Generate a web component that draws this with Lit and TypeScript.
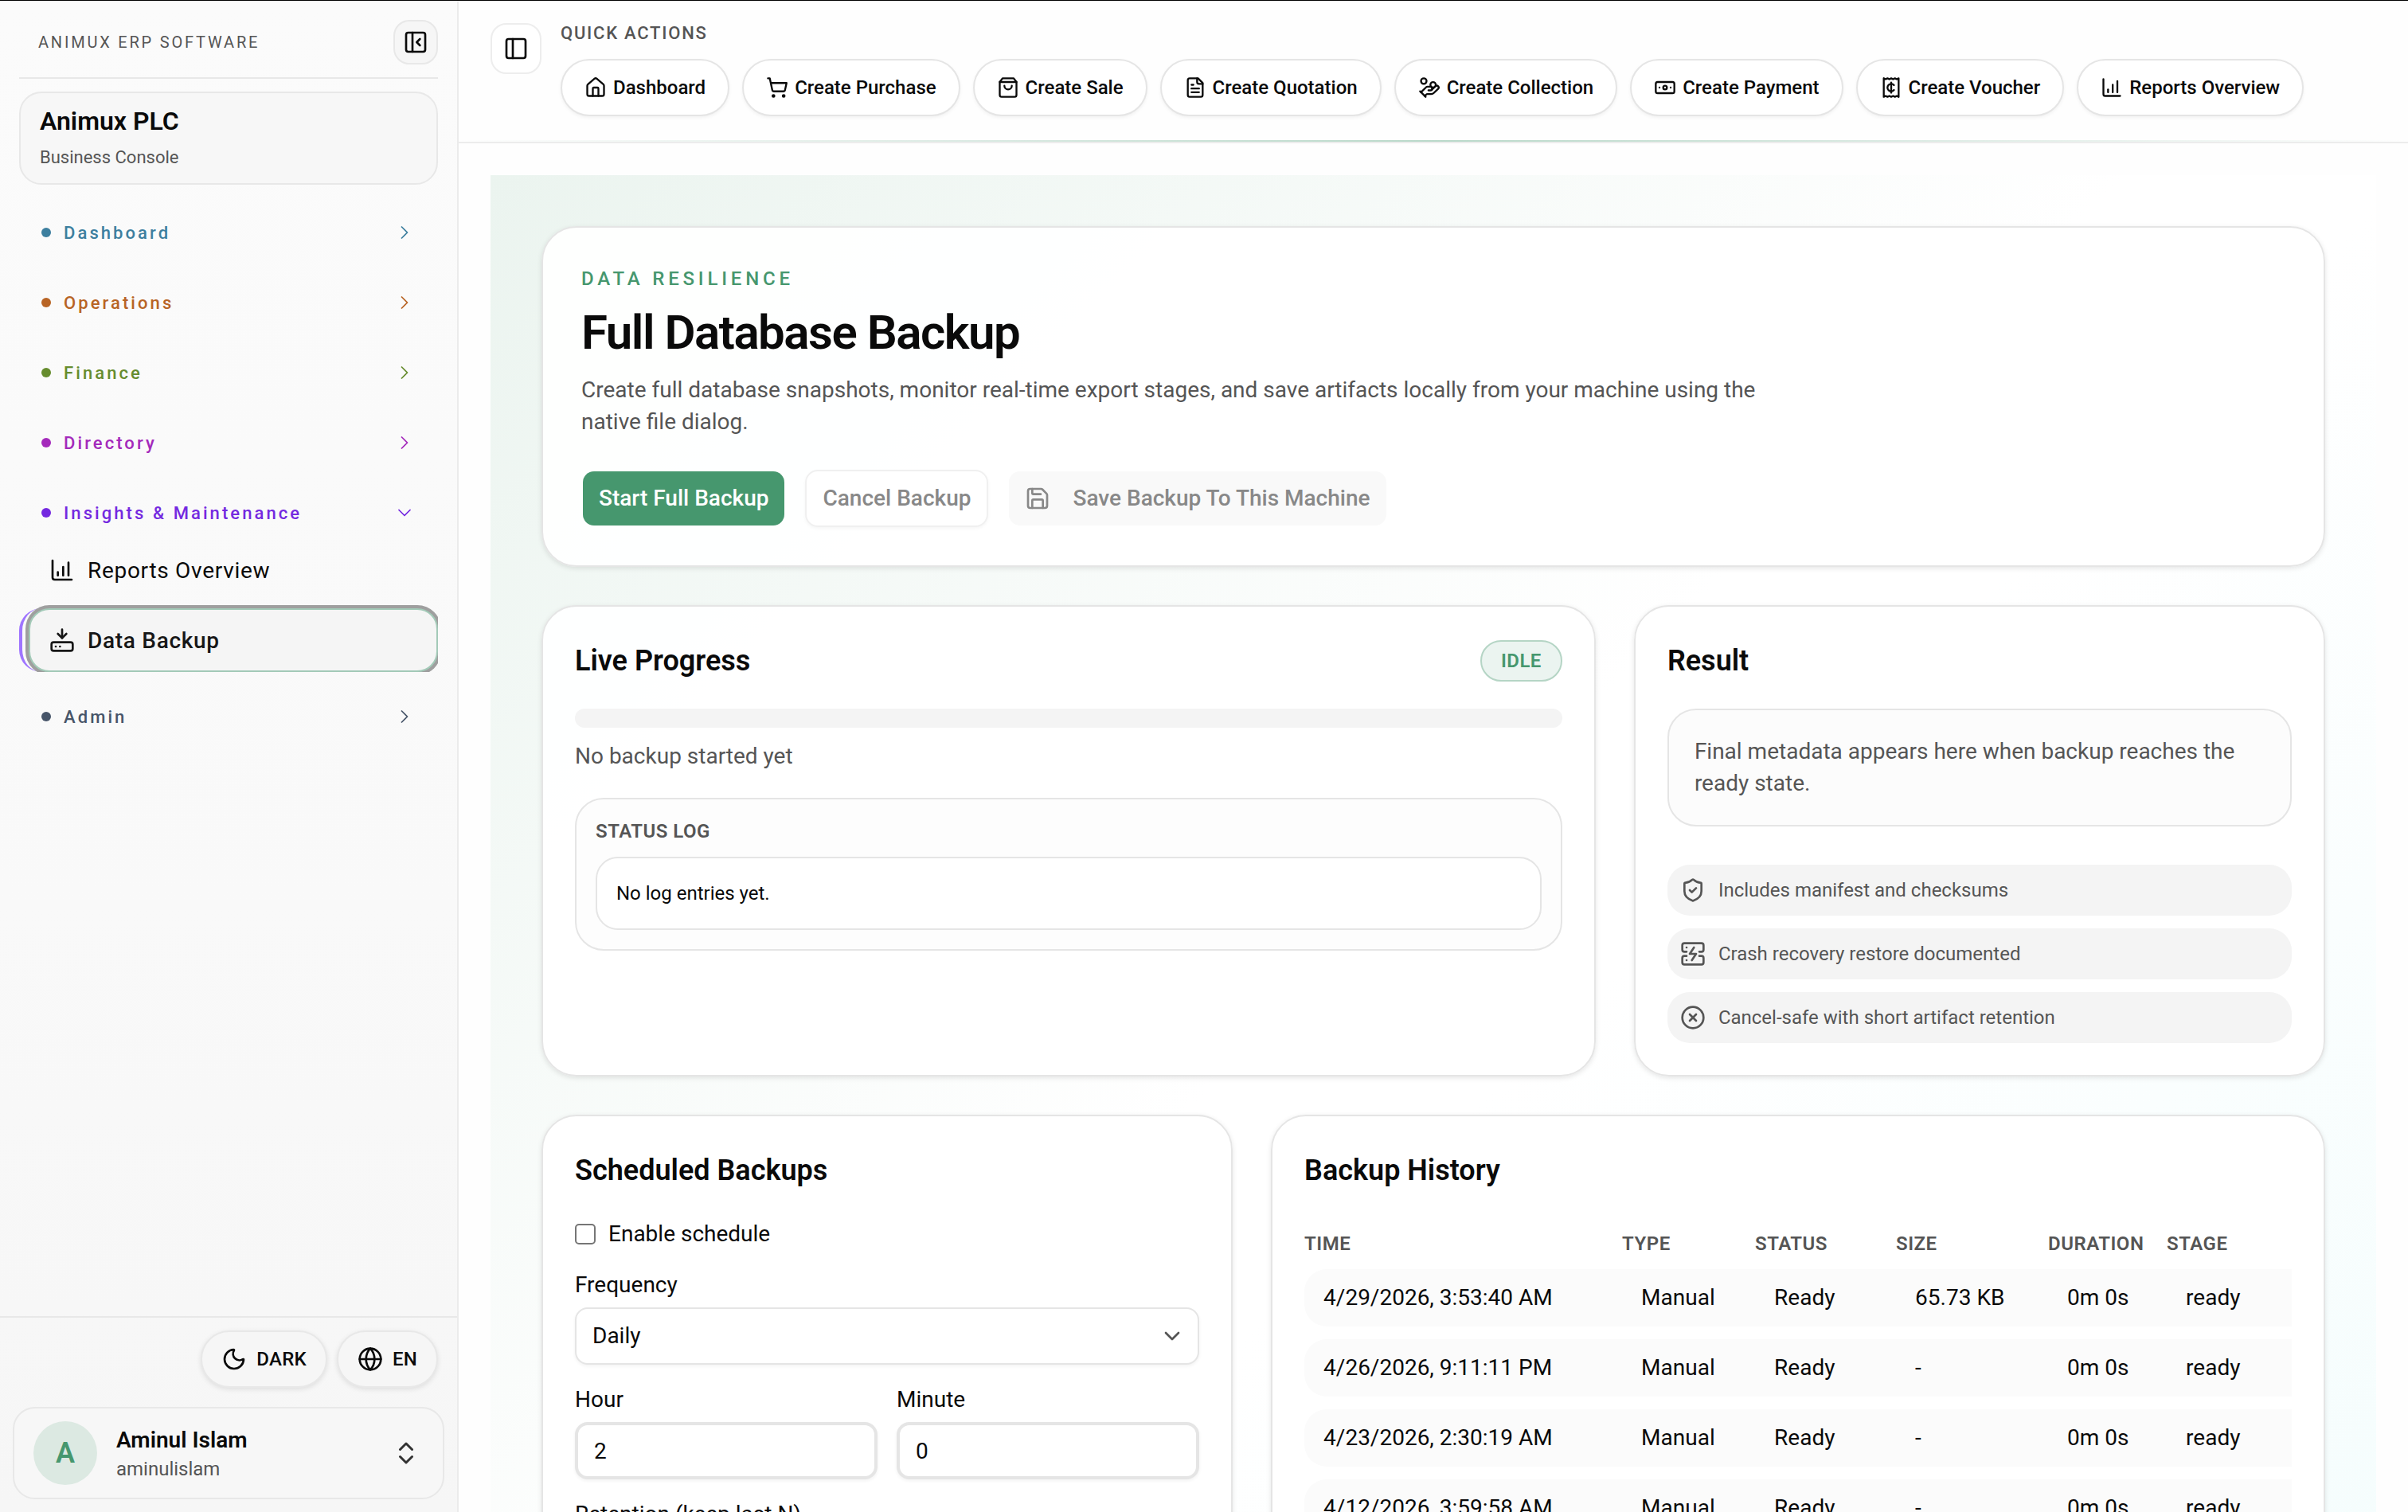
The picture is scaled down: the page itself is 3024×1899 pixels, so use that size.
import { LitElement, html, css, svg, nothing, type SVGTemplateResult } from "lit";
import { customElement, property } from "lit/decorators.js";
import { classMap } from "lit/directives/class-map.js";

const ICONS: Record<string, SVGTemplateResult> = {
  panelClose: svg`<rect width="18" height="18" x="3" y="3" rx="2"/><path d="M9 3v18"/><path d="m16 15-3-3 3-3"/>`,
  panel: svg`<rect width="18" height="18" x="3" y="3" rx="2"/><path d="M9 3v18"/>`,
  right: svg`<path d="m9 18 6-6-6-6"/>`,
  down: svg`<path d="m6 9 6 6 6-6"/>`,
  upDown: svg`<path d="m7 15 5 5 5-5"/><path d="m7 9 5-5 5 5"/>`,
  chart: svg`<path d="M13 17V9"/><path d="M18 17V5"/><path d="M3 3v16a2 2 0 0 0 2 2h16"/><path d="M8 17v-3"/>`,
  drive: svg`<path d="M12 2v8"/><path d="m16 6-4 4-4-4"/><rect width="20" height="8" x="2" y="14" rx="2"/><path d="M6 18h.01"/><path d="M10 18h.01"/>`,
  moon: svg`<path d="M20.985 12.486a9 9 0 1 1-9.473-9.472c.405-.022.617.46.402.803a6 6 0 0 0 8.268 8.268c.344-.215.825-.004.803.401"/>`,
  globe: svg`<circle cx="12" cy="12" r="10"/><path d="M12 2a14.5 14.5 0 0 0 0 20 14.5 14.5 0 0 0 0-20"/><path d="M2 12h20"/>`,
  home: svg`<path d="M15 21v-8a1 1 0 0 0-1-1h-4a1 1 0 0 0-1 1v8"/><path d="M3 10a2 2 0 0 1 .709-1.528l7-6a2 2 0 0 1 2.582 0l7 6A2 2 0 0 1 21 10v9a2 2 0 0 1-2 2H5a2 2 0 0 1-2-2z"/>`,
  cart: svg`<circle cx="8" cy="21" r="1"/><circle cx="19" cy="21" r="1"/><path d="M2.05 2.05h2l2.66 12.42a2 2 0 0 0 2 1.58h9.78a2 2 0 0 0 1.95-1.57l1.65-7.43H5.12"/>`,
  bag: svg`<path d="M6 2 3 6v14a2 2 0 0 0 2 2h14a2 2 0 0 0 2-2V6l-3-4Z"/><path d="M3 6h18"/><path d="M16 10a4 4 0 0 1-8 0"/>`,
  file: svg`<path d="M15 2H6a2 2 0 0 0-2 2v16a2 2 0 0 0 2 2h12a2 2 0 0 0 2-2V7Z"/><path d="M14 2v4a2 2 0 0 0 2 2h4"/><path d="M10 9H8"/><path d="M16 13H8"/><path d="M16 17H8"/>`,
  coins: svg`<path d="M11 15h2a2 2 0 1 0 0-4h-3c-.6 0-1.1.2-1.4.6L3 17"/><path d="m7 21 1.6-1.4c.3-.4.8-.6 1.4-.6h4c1.1 0 2.1-.4 2.8-1.2l4.6-4.4a2 2 0 0 0-2.75-2.91l-4.2 3.9"/><path d="m2 16 6 6"/><circle cx="16" cy="9" r="2.9"/><circle cx="6" cy="5" r="3"/>`,
  banknote: svg`<rect width="20" height="12" x="2" y="6" rx="2"/><circle cx="12" cy="12" r="2"/><path d="M6 12h.01M18 12h.01"/>`,
  receipt: svg`<path d="M4 2v20l2-1 2 1 2-1 2 1 2-1 2 1 2-1 2 1V2l-2 1-2-1-2 1-2-1-2 1-2-1-2 1Z"/><path d="M12 6.5v11"/><path d="M15 9.4a4 4 0 1 0 0 5.2"/>`,
  save: svg`<path d="M15.2 3a2 2 0 0 1 1.4.6l3.8 3.8a2 2 0 0 1 .6 1.4V19a2 2 0 0 1-2 2H5a2 2 0 0 1-2-2V5a2 2 0 0 1 2-2z"/><path d="M17 21v-7a1 1 0 0 0-1-1H8a1 1 0 0 0-1 1v7"/><path d="M7 3v4a1 1 0 0 0 1 1h7"/>`,
  shield: svg`<path d="M20 13c0 5-3.5 7.5-7.66 8.95a1 1 0 0 1-.67-.01C7.5 20.5 4 18 4 13V6a1 1 0 0 1 1-1c2 0 4.500-1.200 6.240-2.720a1.170 1.170 0 0 1 1.520 0C14.510 3.810 17 5 19 5a1 1 0 0 1 1 1z"/><path d="m9 12 2 2 4-4"/>`,
  crash: svg`<path d="M6 10H4a2 2 0 0 1-2-2V4a2 2 0 0 1 2-2h16a2 2 0 0 1 2 2v4a2 2 0 0 1-2 2h-2"/><path d="M6 14H4a2 2 0 0 0-2 2v4a2 2 0 0 0 2 2h16a2 2 0 0 0 2-2v-4a2 2 0 0 0-2-2h-2"/><path d="M6 6h.01"/><path d="M6 18h.01"/><path d="m13 6-4 6h6l-4 6"/>`,
  cancel: svg`<circle cx="12" cy="12" r="10"/><path d="m15 9-6 6"/><path d="m9 9 6 6"/>`,
};

@customElement("ui-icon")
export class UiIcon extends LitElement {
  @property() name = "";
  @property({ type: Number }) weight = 2;

  static styles = css`
    :host { display: inline-flex; flex: none; width: 32px; height: 32px; }
    svg { width: 100%; height: 100%; fill: none; stroke: currentColor; stroke-linecap: round; stroke-linejoin: round; }
  `;

  render() {
    return html`<svg viewBox="0 0 24 24" stroke-width=${this.weight} aria-hidden="true">${ICONS[this.name]}</svg>`;
  }
}

const base = css`
  :host, * { box-sizing: border-box; }
  * { margin: 0; }
  button, input, select { font: inherit; color: inherit; letter-spacing: inherit; }
  button { cursor: pointer; }
  a { color: inherit; text-decoration: none; }
  ul { list-style: none; padding: 0; }
`;

interface NavGroup { label: string; tone: string; open?: boolean; }

const GROUPS: NavGroup[] = [
  { label: "Dashboard", tone: "blue" },
  { label: "Operations", tone: "orange" },
  { label: "Finance", tone: "green" },
  { label: "Directory", tone: "magenta" },
  { label: "Insights & Maintenance", tone: "violet", open: true },
  { label: "Admin", tone: "slate" },
];

const LINKS = [
  { label: "Reports Overview", icon: "chart", active: false },
  { label: "Data Backup", icon: "drive", active: true },
];

@customElement("side-nav")
export class SideNav extends LitElement {
  static styles = [base, css`
    :host {
      display: flex; flex-direction: column; width: 576px; flex: none; min-height: 0;
      border-right: 2px solid #ebebeb; background: linear-gradient(#fbfbfb, #f9f9f9 60%, #f6f6f6);
    }
    .top { padding: 24px 24px 0; display: flex; flex-direction: column; gap: 16px; }
    .brand { display: flex; align-items: center; justify-content: space-between; padding: 0 0 16px 24px; border-bottom: 2px solid #e8e8e8; }
    .brand-name { font-size: 20px; line-height: 32px; letter-spacing: 0.14em; color: #555; }
    .collapse { display: flex; align-items: center; justify-content: center; width: 56px; height: 56px; padding: 0; border: 2px solid #e8e8e8; border-radius: 20px; background: #f6f6f6; }
    .company { padding: 16px 24px; border: 2px solid #e8e8e8; border-radius: 28px; background: #f7f7f7; display: flex; flex-direction: column; gap: 11px; }
    .company-name { font-size: 32px; line-height: 38px; font-weight: 600; }
    .company-sub { font-size: 22px; line-height: 32px; color: #555; }
    .nav { flex: 1; min-height: 0; padding: 28px 24px 0; display: flex; flex-direction: column; gap: 24px; overflow: hidden; }
    .group { display: flex; align-items: center; gap: 16px; width: 100%; height: 64px; padding: 0 28px; border: 0; background: none; font-size: 22px; font-weight: 500; letter-spacing: 0.14em; text-align: left; }
    .group ui-icon { width: 28px; height: 28px; margin-left: auto; }
    .dot { width: 12px; height: 12px; border-radius: 50%; background: currentColor; }
    .blue { color: #3d7f9f; } .orange { color: #b86425; } .green { color: #668c2e; }
    .magenta { color: #a42abb; } .violet { color: #7429e0; } .slate { color: #475569; }
    .sub { display: flex; flex-direction: column; gap: 8px; overflow: hidden; }
    .entry { border-left: 4px solid transparent; border-radius: 28px; padding-left: 8px; }
    .entry.active { border-left-color: #9f75ff; }
    .link { display: flex; align-items: center; gap: 16px; height: 80px; padding: 0 24px; border: 2px solid transparent; border-radius: 26px; font-size: 28px; letter-spacing: 0.025em; }
    .active .link { font-weight: 500; color: #171717; background: #f5f5f5; border-color: #a3cab8; box-shadow: 0 0 0 4px #9f9f9f; }
    .foot { padding: 16px; border-top: 2px solid #e8e8e8; display: flex; flex-direction: column; gap: 24px; }
    .tools { display: flex; justify-content: flex-end; gap: 12px; padding-right: 8px; }
    .tool { display: flex; align-items: center; gap: 12px; height: 72px; padding: 0 24px; border: 2px solid #e8e8e8; border-radius: 36px; background: #f6f6f6; box-shadow: 0 2px 6px rgba(0, 0, 0, 0.1); font-size: 24px; font-weight: 500; letter-spacing: 0.01em; }
    .user { display: flex; align-items: center; gap: 24px; width: 100%; padding: 16px 28px 16px 24px; border: 2px solid #e8e8e8; border-radius: 28px; background: #f7f7f7; text-align: left; }
    .user ui-icon { width: 36px; height: 36px; margin-left: auto; color: #333; }
    .avatar { display: grid; place-items: center; width: 80px; height: 80px; border-radius: 50%; background: #dce9e2; color: #46976e; font-size: 36px; font-weight: 600; }
    .who { display: flex; flex-direction: column; }
    .who-name { font-size: 28px; line-height: 40px; font-weight: 600; }
    .who-id { font-size: 24px; line-height: 32px; color: #555; }
  `];

  render() {
    return html`
      <div class="top">
        <div class="brand">
          <span class="brand-name">ANIMUX ERP SOFTWARE</span>
          <button class="collapse" aria-label="Collapse sidebar"><ui-icon name="panelClose"></ui-icon></button>
        </div>
        <div class="company">
          <div class="company-name">Animux PLC</div>
          <div class="company-sub">Business Console</div>
        </div>
      </div>
      <nav class="nav">
        ${GROUPS.map((g) => html`
          <div>
            <button class="group ${g.tone}" aria-expanded=${g.open ? "true" : "false"}>
              <span class="dot"></span>${g.label}
              <ui-icon name=${g.open ? "down" : "right"} weight="1.5"></ui-icon>
            </button>
            ${g.open ? html`<ul class="sub">
              ${LINKS.map((l) => html`<li class=${classMap({ entry: true, active: l.active })}>
                <a class="link" href="#"><ui-icon name=${l.icon}></ui-icon>${l.label}</a>
              </li>`)}
            </ul>` : nothing}
          </div>`)}
      </nav>
      <div class="foot">
        <div class="tools">
          <button class="tool"><ui-icon name="moon"></ui-icon>DARK</button>
          <button class="tool"><ui-icon name="globe"></ui-icon>EN</button>
        </div>
        <button class="user">
          <span class="avatar">A</span>
          <span class="who"><span class="who-name">Aminul Islam</span><span class="who-id">aminulislam</span></span>
          <ui-icon name="upDown"></ui-icon>
        </button>
      </div>`;
  }
}

const ACTIONS = [
  ["home", "Dashboard"], ["cart", "Create Purchase"], ["bag", "Create Sale"], ["file", "Create Quotation"],
  ["coins", "Create Collection"], ["banknote", "Create Payment"], ["receipt", "Create Voucher"], ["chart", "Reports Overview"],
];

@customElement("quick-bar")
export class QuickBar extends LitElement {
  static styles = [base, css`
    :host { display: block; flex: none; }
    .bar { display: flex; gap: 24px; padding: 25px 40px 30px; }
    .toggle { display: flex; align-items: center; justify-content: center; flex: none; width: 64px; height: 64px; margin-top: 3px; padding: 0; border: 2px solid #ededed; border-radius: 20px; background: #fff; }
    .label { font-size: 22px; line-height: 32px; font-weight: 500; letter-spacing: 0.08em; color: #555; }
    .list { display: flex; gap: 16px; margin-top: 16px; }
    .pill { display: flex; align-items: center; gap: 8px; height: 72px; padding: 0 28px; border: 2px solid #e5e5e5; border-radius: 36px; background: #fff; box-shadow: 0 2px 4px rgba(0, 0, 0, 0.05); font-size: 24px; font-weight: 500; white-space: nowrap; }
    .pill ui-icon { width: 28px; height: 28px; }
    .glow { height: 2px; background: linear-gradient(90deg, transparent, #b9d8c9, transparent); }
    .rule { height: 2px; background: #ececec; }
  `];

  render() {
    return html`
      <div class="bar">
        <button class="toggle" aria-label="Toggle sidebar"><ui-icon name="panel"></ui-icon></button>
        <div>
          <div class="label">QUICK ACTIONS</div>
          <div class="list">
            ${ACTIONS.map(([icon, text]) => html`<a class="pill" href="#"><ui-icon name=${icon}></ui-icon>${text}</a>`)}
          </div>
        </div>
      </div>
      <div class="glow"></div>
      <div class="rule"></div>`;
  }
}

const NOTES = [
  ["shield", "Includes manifest and checksums"],
  ["crash", "Crash recovery restore documented"],
  ["cancel", "Cancel-safe with short artifact retention"],
];

const HISTORY = [
  ["4/29/2026, 3:53:40 AM", "Manual", "Ready", "65.73 KB", "0m 0s", "ready"],
  ["4/26/2026, 9:11:11 PM", "Manual", "Ready", "-", "0m 0s", "ready"],
  ["4/23/2026, 2:30:19 AM", "Manual", "Ready", "-", "0m 0s", "ready"],
  ["4/12/2026, 3:59:58 AM", "Manual", "Ready", "-", "0m 0s", "ready"],
];

@customElement("backup-page")
export class BackupPage extends LitElement {
  static styles = [base, css`
    :host { display: block; flex: 1; min-height: 0; overflow: hidden; padding: 40px; font-size: 28px; line-height: 40px; }
    .panel {
      display: flex; flex-direction: column; gap: 48px; padding: 64px;
      background: linear-gradient(135deg, #ebf4ef 0, #fff 1450px, #fff 1700px, #f5fdfd 2900px);
    }
    .card { min-width: 0; padding: 40px; border: 2px solid #e5e5e5; border-radius: 44px; background: rgba(255, 255, 255, 0.92); box-shadow: 0 2px 6px rgba(0, 0, 0, 0.1); }
    .row { display: grid; gap: 48px; }
    .wide-first { grid-template-columns: 61fr 40fr; }
    .wide-last { grid-template-columns: 40fr 61fr; }
    .hero { padding: 48px; }
    .eyebrow { font-size: 24px; line-height: 32px; font-weight: 500; letter-spacing: 0.2em; color: #46976e; }
    h1 { margin-top: 12px; font-size: 60px; line-height: 80px; font-weight: 600; letter-spacing: -0.025em; }
    .lead { max-width: 1536px; margin-top: 12px; color: #555; }
    .buttons { display: flex; gap: 24px; margin-top: 40px; }
    .btn { display: flex; align-items: center; gap: 28px; height: 72px; padding: 0 20px; border: 2px solid transparent; border-radius: 16px; background: #f9f9f9; background-clip: padding-box; font-weight: 500; color: #888; }
    .primary { background-color: #46976e; color: #fff; }
    .outline { background-color: #fff; border-color: #f0f0f0; box-shadow: 0 2px 4px rgba(0, 0, 0, 0.04); }
    .head { display: flex; align-items: center; justify-content: space-between; margin-bottom: 32px; }
    h2 { font-size: 36px; line-height: 56px; font-weight: 600; }
    .badge { display: flex; align-items: center; height: 52px; padding: 0 24px; border: 2px solid #b5d5c5; border-radius: 26px; background: #ebf4f0; color: #46976e; font-size: 24px; font-weight: 600; letter-spacing: 0.02em; }
    .meter { height: 24px; border-radius: 12px; background: #f4f4f4; }
    .muted { color: #555; }
    .state { margin-top: 16px; }
    .log { margin-top: 32px; padding: 24px; border: 2px solid #e5e5e5; border-radius: 36px; background: #fdfdfd; font-size: 24px; }
    .log-title { line-height: 32px; font-weight: 600; font-size: 24px; letter-spacing: 0.02em; color: #555; }
    .log-box { margin-top: 16px; padding: 24px; border: 2px solid #e5e5e5; border-radius: 28px; background: #fff; }
    .hint { padding: 32px; border: 2px solid #e5e5e5; border-radius: 36px; background: #fcfcfc; color: #555; }
    .notes { display: flex; flex-direction: column; gap: 16px; margin-top: 48px; }
    .note { display: flex; align-items: center; gap: 16px; height: 64px; padding: 0 16px; border-radius: 28px; background: #f4f4f4; color: #555; font-size: 24px; }
    .form { display: flex; flex-direction: column; gap: 24px; }
    .check { display: flex; align-items: center; gap: 16px; }
    .check input { appearance: none; width: 26px; height: 26px; border: 2px solid #767676; border-radius: 5px; background: #fff; }
    .field { display: flex; flex-direction: column; gap: 8px; min-width: 0; }
    .pair { display: grid; grid-template-columns: 1fr 1fr; gap: 24px; }
    .pick { display: grid; align-items: center; }
    .pick > * { grid-area: 1 / 1; }
    .pick ui-icon { justify-self: end; margin-right: 18px; color: #555; pointer-events: none; }
    select { appearance: none; width: 100%; height: 72px; padding: 0 20px; border: 2px solid #e5e5e5; border-radius: 16px; background: #fff; box-shadow: 0 2px 4px rgba(0, 0, 0, 0.05); }
    .box { appearance: none; width: 100%; height: 72px; padding: 0 20px; border: 4px solid #e5e5e5; border-radius: 16px; background: #fff; box-shadow: 0 2px 4px rgba(0, 0, 0, 0.05); }
    .scroll { overflow: hidden; }
    table { width: 1360px; table-layout: fixed; border-collapse: separate; border-spacing: 0 16px; text-align: left; }
    th { padding: 0; font-size: 24px; line-height: 32px; font-weight: 600; letter-spacing: 0.02em; color: #555; }
    td { padding: 16px 24px; background: #fbfbfb; white-space: nowrap; }
    td:first-child { border-radius: 28px 0 0 28px; }
    td:last-child { border-radius: 0 28px 28px 0; }
    .c-time { width: 399px; } .c-type { width: 167px; } .c-status { width: 177px; } .c-size { width: 191px; } .c-duration { width: 149px; }
  `];

  render() {
    return html`
      <div class="panel">
        <section class="card hero">
          <p class="eyebrow">DATA RESILIENCE</p>
          <h1>Full Database Backup</h1>
          <p class="lead">Create full database snapshots, monitor real-time export stages, and save artifacts locally from your machine using the native file dialog.</p>
          <div class="buttons">
            <button class="btn primary">Start Full Backup</button>
            <button class="btn outline" disabled>Cancel Backup</button>
            <button class="btn" disabled><ui-icon name="save"></ui-icon>Save Backup To This Machine</button>
          </div>
        </section>

        <div class="row wide-first">
          <section class="card">
            <div class="head"><h2>Live Progress</h2><span class="badge">IDLE</span></div>
            <div class="meter" role="progressbar" aria-valuenow="0"></div>
            <p class="muted state">No backup started yet</p>
            <div class="log">
              <h3 class="log-title">STATUS LOG</h3>
              <div class="log-box">No log entries yet.</div>
            </div>
          </section>
          <section class="card">
            <div class="head"><h2>Result</h2></div>
            <p class="hint">Final metadata appears here when backup reaches the ready state.</p>
            <ul class="notes">
              ${NOTES.map(([icon, text]) => html`<li class="note"><ui-icon name=${icon}></ui-icon>${text}</li>`)}
            </ul>
          </section>
        </div>

        <div class="row wide-last">
          <section class="card">
            <div class="head"><h2>Scheduled Backups</h2></div>
            <form class="form">
              <label class="check"><input type="checkbox" />Enable schedule</label>
              <div class="field">
                <label for="frequency">Frequency</label>
                <div class="pick">
                  <select id="frequency"><option>Daily</option></select>
                  <ui-icon name="down"></ui-icon>
                </div>
              </div>
              <div class="pair">
                <div class="field"><label for="hour">Hour</label><input class="box" id="hour" value="2" inputmode="numeric" /></div>
                <div class="field"><label for="minute">Minute</label><input class="box" id="minute" value="0" inputmode="numeric" /></div>
              </div>
              <div class="field"><label for="keep">Retention (keep last N)</label><input class="box" id="keep" inputmode="numeric" /></div>
            </form>
          </section>
          <section class="card">
            <div class="head"><h2>Backup History</h2></div>
            <div class="scroll">
              <table>
                <thead><tr>
                  <th class="c-time">TIME</th><th class="c-type">TYPE</th><th class="c-status">STATUS</th>
                  <th class="c-size">SIZE</th><th class="c-duration">DURATION</th><th>STAGE</th>
                </tr></thead>
                <tbody>
                  ${HISTORY.map((r) => html`<tr>${r.map((c) => html`<td>${c}</td>`)}</tr>`)}
                </tbody>
              </table>
            </div>
          </section>
        </div>
      </div>`;
  }
}

@customElement("app-root")
export class AppRoot extends LitElement {
  static styles = css`
    :host {
      box-sizing: border-box; display: flex; height: 100vh; overflow: hidden; border-top: 1px solid #000;
      background: #fefefe; color: #0a0a0a; font-family: Roboto, "Liberation Sans", sans-serif;
    }
    .main { flex: 1; min-width: 0; display: flex; flex-direction: column; }
  `;

  render() {
    return html`<side-nav></side-nav><main class="main"><quick-bar></quick-bar><backup-page></backup-page></main>`;
  }
}
